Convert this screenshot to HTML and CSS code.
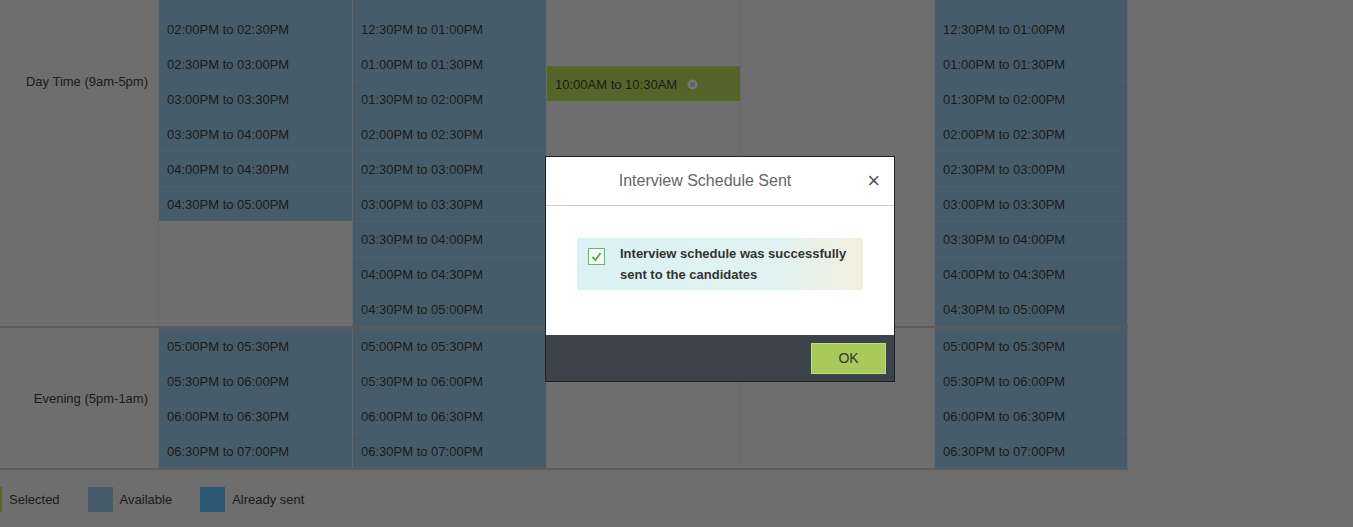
FILE: index.html
```html
<!DOCTYPE html>
<html lang="en">
<head>
  <meta charset="UTF-8">
  <title>Interview Schedule</title>
  <link rel="stylesheet" href="styles.css">
</head>
<body>
  <div class="page">
    <div class="schedule">
      <!-- Day time -->
      <div class="section day">
        <div class="label">Day Time (9am-5pm)</div>
        <div class="col">
          <div class="slot available">11:30AM to 12:00PM</div>
          <div class="slot available">12:00PM to 12:30PM</div>
          <div class="slot available">12:30PM to 01:00PM</div>
          <div class="slot available">01:00PM to 01:30PM</div>
          <div class="slot available">01:30PM to 02:00PM</div>
          <div class="slot available">02:00PM to 02:30PM</div>
          <div class="slot available">02:30PM to 03:00PM</div>
          <div class="slot available">03:00PM to 03:30PM</div>
          <div class="slot available">03:30PM to 04:00PM</div>
          <div class="slot available">04:00PM to 04:30PM</div>
          <div class="slot available">04:30PM to 05:00PM</div>
        </div>
        <div class="col">
          <div class="slot available">10:00AM to 10:30AM</div>
          <div class="slot available">10:30AM to 11:00AM</div>
          <div class="slot available">11:00AM to 11:30AM</div>
          <div class="slot available">11:30AM to 12:00PM</div>
          <div class="slot available">12:00PM to 12:30PM</div>
          <div class="slot available">12:30PM to 01:00PM</div>
          <div class="slot available">01:00PM to 01:30PM</div>
          <div class="slot available">01:30PM to 02:00PM</div>
          <div class="slot available">02:00PM to 02:30PM</div>
          <div class="slot available">02:30PM to 03:00PM</div>
          <div class="slot available">03:00PM to 03:30PM</div>
          <div class="slot available">03:30PM to 04:00PM</div>
          <div class="slot available">04:00PM to 04:30PM</div>
          <div class="slot available">04:30PM to 05:00PM</div>
        </div>
        <div class="col middle">
          <div class="slot selected">10:00AM to 10:30AM
            <svg class="remove" width="11" height="11" viewBox="0 0 11 11">
              <circle cx="5.5" cy="5.5" r="5" fill="#d9d9d9"/>
              <path d="M3.5 3.5l4 4M7.5 3.5l-4 4" stroke="#9a9a9a" stroke-width="1.3"/>
            </svg>
          </div>
        </div>
        <div class="col"></div>
        <div class="col">
          <div class="slot available">10:00AM to 10:30AM</div>
          <div class="slot available">10:30AM to 11:00AM</div>
          <div class="slot available">11:00AM to 11:30AM</div>
          <div class="slot available">11:30AM to 12:00PM</div>
          <div class="slot available">12:00PM to 12:30PM</div>
          <div class="slot available">12:30PM to 01:00PM</div>
          <div class="slot available">01:00PM to 01:30PM</div>
          <div class="slot available">01:30PM to 02:00PM</div>
          <div class="slot available">02:00PM to 02:30PM</div>
          <div class="slot available">02:30PM to 03:00PM</div>
          <div class="slot available">03:00PM to 03:30PM</div>
          <div class="slot available">03:30PM to 04:00PM</div>
          <div class="slot available">04:00PM to 04:30PM</div>
          <div class="slot available">04:30PM to 05:00PM</div>
        </div>
      </div>

      <!-- Evening -->
      <div class="section">
        <div class="label">Evening (5pm-1am)</div>
        <div class="col">
          <div class="slot available">05:00PM to 05:30PM</div>
          <div class="slot available">05:30PM to 06:00PM</div>
          <div class="slot available">06:00PM to 06:30PM</div>
          <div class="slot available">06:30PM to 07:00PM</div>
        </div>
        <div class="col">
          <div class="slot available">05:00PM to 05:30PM</div>
          <div class="slot available">05:30PM to 06:00PM</div>
          <div class="slot available">06:00PM to 06:30PM</div>
          <div class="slot available">06:30PM to 07:00PM</div>
        </div>
        <div class="col"></div>
        <div class="col"></div>
        <div class="col">
          <div class="slot available">05:00PM to 05:30PM</div>
          <div class="slot available">05:30PM to 06:00PM</div>
          <div class="slot available">06:00PM to 06:30PM</div>
          <div class="slot available">06:30PM to 07:00PM</div>
        </div>
      </div>
    </div>

    <div class="legend">
      <span class="swatch selected"></span><span class="legend-text">Selected</span>
      <span class="swatch available"></span><span class="legend-text">Available</span>
      <span class="swatch sent"></span><span class="legend-text">Already sent</span>
    </div>
  </div>

  <!-- Modal -->
  <div class="backdrop"></div>
  <div class="modal">
    <div class="modal-header">
      <span class="modal-title">Interview Schedule Sent</span>
      <span class="modal-close">&times;</span>
    </div>
    <div class="modal-body">
      <div class="notice">
        <span class="check">
          <svg width="13" height="13" viewBox="0 0 13 13">
            <path d="M2.5 7l3 3 5-7" fill="none" stroke="#5aa75a" stroke-width="1.8"/>
          </svg>
        </span>
        <p>Interview schedule was successfully sent to the candidates</p>
      </div>
    </div>
    <div class="modal-footer">
      <button class="btn-ok">OK</button>
    </div>
  </div>
</body>
</html>
```

FILE: styles.css
```css
:root {
  --page-bg: #c9c9c9;
  --text: #333333;
  --available: #80a8c2;
  --sent: #4f9fd2;
  --selected: #9cb74c;
  --divider: #aca399;
}

* {
  margin: 0;
  padding: 0;
  box-sizing: border-box;
}

html, body {
  height: 100%;
  overflow: hidden;
}

body {
  background: var(--page-bg);
  font-family: "Liberation Sans", Arial, sans-serif;
  font-size: 13px;
  color: var(--text);
}

/* Tabla de horarios (desplazada hacia arriba) */
.schedule {
  margin-top: -164px;
  width: 1128px;
}

.section {
  display: grid;
  grid-template-columns: 158px repeat(5, 194px);
  border-bottom: 2px solid var(--divider);
}

.label {
  display: flex;
  align-items: center;
  justify-content: flex-end;
  padding-right: 10px;
}

.col {
  display: flex;
  flex-direction: column;
  border-left: 1px dotted #b4b4b4;
}

.col:last-child {
  border-right: 1px dotted #b4b4b4;
}

.col.middle {
  justify-content: center;
}

.slot {
  height: 35px;
  display: flex;
  align-items: center;
  padding-left: 8px;
  border-top: 1px solid rgba(255, 255, 255, 0.08);
}

.slot.available {
  background: var(--available);
}

.slot.selected {
  background: var(--selected);
  gap: 10px;
  margin-top: 5px;
}

.remove {
  margin-top: 1px;
}

/* Leyenda */
.legend {
  display: flex;
  align-items: center;
  margin: 17px 0 0 -23px;
}

.swatch {
  width: 25px;
  height: 25px;
}

.swatch.selected { background: var(--selected); }
.swatch.available { background: var(--available); }
.swatch.sent { background: var(--sent); }

.legend-text {
  margin: 0 28px 0 7px;
}

/* Modal */
.backdrop {
  position: fixed;
  inset: 0;
  background: rgba(0, 0, 0, 0.45);
}

.modal {
  position: fixed;
  top: 156px;
  left: 545px;
  width: 350px;
  border: 1px solid #1e2226;
  background: #fff;
}

.modal-header {
  height: 49px;
  display: flex;
  align-items: center;
  justify-content: center;
  position: relative;
  padding-right: 30px;
  border-bottom: 1px solid #cfc8d6;
}

.modal-title {
  font-size: 16px;
  color: #666;
}

.modal-close {
  position: absolute;
  right: 14px;
  top: 11px;
  font-size: 22px;
  color: #555;
}

.modal-body {
  height: 129px;
  padding: 32px 31px 0 31px;
}

.notice {
  display: flex;
  align-items: flex-start;
  gap: 15px;
  height: 52px;
  padding: 8px 10px 0 11px;
  background: linear-gradient(to right, #dbf1f3, #e0f3f0 70%, #f3efdc);
}

.check {
  width: 17px;
  height: 17px;
  margin-top: 2px;
  flex-shrink: 0;
  border: 1px solid #6bb56b;
  background: #f4fbf4;
  display: flex;
  align-items: center;
  justify-content: center;
}

.notice p {
  font-weight: bold;
  line-height: 21px;
  margin-top: -3px;
}

.modal-footer {
  height: 46px;
  background: #3c434a;
  display: flex;
  align-items: center;
  justify-content: flex-end;
  padding-right: 8px;
}

.btn-ok {
  width: 75px;
  height: 31px;
  background: #a9c95a;
  border: 1px solid #c1da82;
  font-family: "Liberation Sans", Arial, sans-serif;
  font-size: 14px;
  color: #333;
}
```
